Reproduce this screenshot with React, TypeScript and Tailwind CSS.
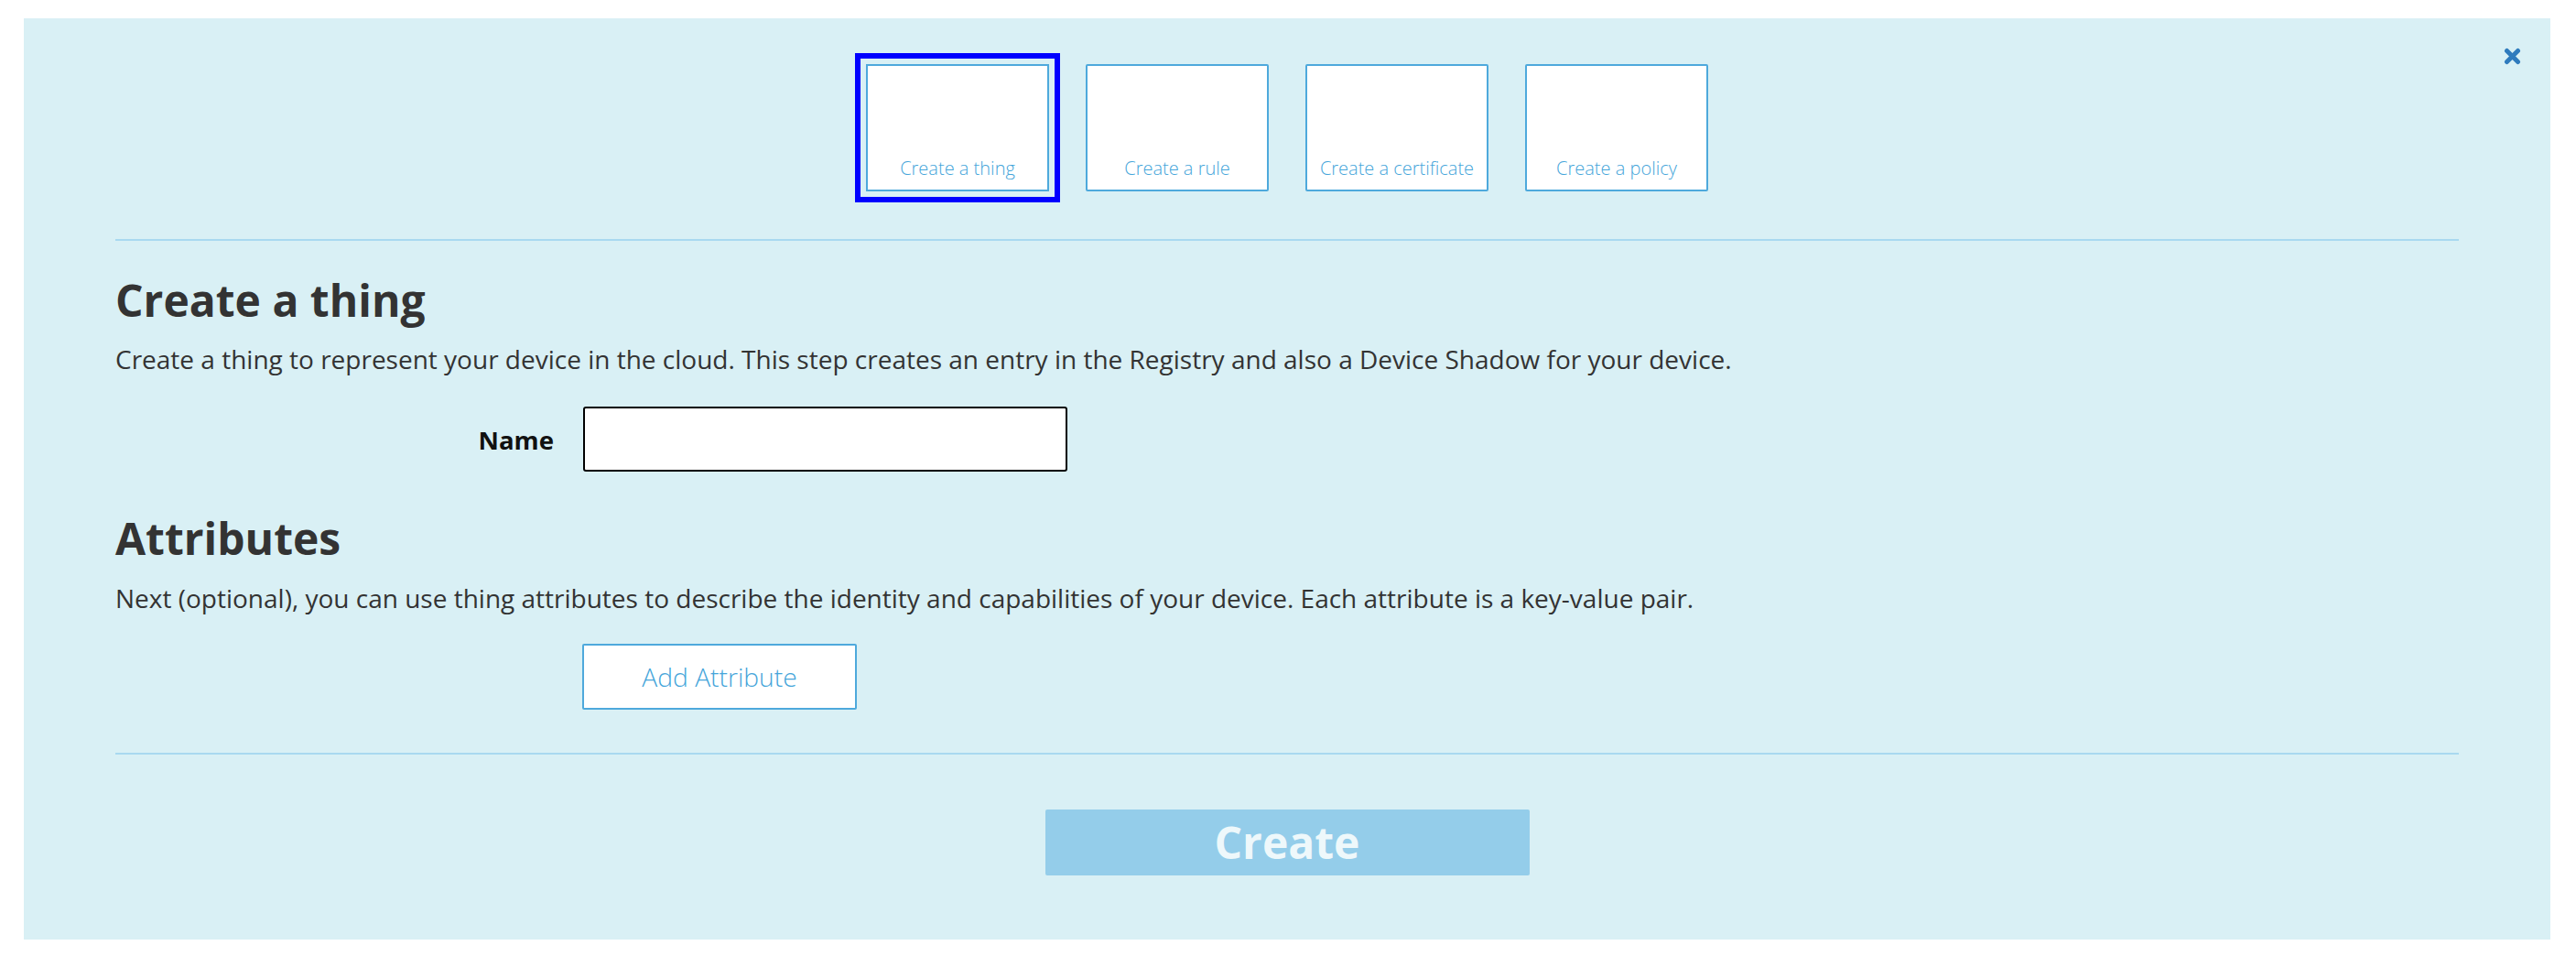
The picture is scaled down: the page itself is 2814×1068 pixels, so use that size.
import React from "react";

const cards = ["Create a thing", "Create a rule", "Create a certificate", "Create a policy"];

export default function App() {
  return (
    <div
      className="w-[2814px] h-[1068px] bg-white pt-[20px] pl-[26px]"
      style={{ fontFamily: '"Open Sans", "Noto Sans", sans-serif' }}
    >
      <div className="relative w-[2760px] h-[1006px] bg-[#d9f0f5] px-[100px] pt-[50px]">
        <button className="absolute top-[32px] right-[32px] w-[19px] h-[19px]" aria-label="Close">
          <svg viewBox="0 0 19 19" width="19" height="19">
            <path d="M3.5 3.5 L15.5 15.5 M15.5 3.5 L3.5 15.5" stroke="#2f7bbd" strokeWidth="5" strokeLinecap="round" fill="none" />
          </svg>
        </button>

        <div className="flex justify-center gap-[40px]">
          {cards.map((c, i) => (
            <div
              key={c}
              className={
                "w-[200px] h-[139px] bg-white border-2 border-[#4ea9dc] flex flex-col justify-end items-center pb-[8px] " +
                (i === 0
                  ? "rounded-none outline-solid outline-[6px] outline-[#0000ff] outline-offset-[6px]"
                  : "rounded-[2px]")
              }
            >
              <span className="text-[20px] leading-[30px] font-light text-[#45a5da] whitespace-nowrap">{c}</span>
            </div>
          ))}
        </div>

        <div className="mt-[52px] h-[2px] bg-[#a9d9f0]" />

        <h2 className="mt-[37px] text-[48px] leading-[56px] font-bold text-[#333333]">Create a thing</h2>
        <p className="mt-[18px] text-[28px] leading-[36px] text-[#333333]">
          Create a thing to represent your device in the cloud. This step creates an entry in the Registry and also a Device Shadow for your device.
        </p>

        <div className="mt-[34px] flex items-center">
          <label className="w-[479px] text-right text-[27.6px] leading-[40px] font-bold text-[#111111]">Name</label>
          <input
            type="text"
            className="ml-[32px] w-[529px] h-[71px] bg-white border-2 border-black rounded-[3px] outline-none px-3 text-[25px]"
          />
        </div>

        <h2 className="mt-[45px] text-[48px] leading-[56px] font-bold text-[#333333]">Attributes</h2>
        <p className="mt-[19px] text-[28px] leading-[36px] text-[#333333]">
          Next (optional), you can use thing attributes to describe the identity and capabilities of your device. Each attribute is a key-value pair.
        </p>

        <div className="mt-[32px] pl-[510px]">
          <button className="w-[300px] h-[72px] bg-white border-2 border-[#4ea9dc] rounded-[2px] text-[28.2px] font-light text-[#45a5da]">
            Add Attribute
          </button>
        </div>

        <div className="mt-[47px] h-[2px] bg-[#a9d9f0]" />

        <div className="mt-[60px] flex justify-center">
          <button className="w-[529px] h-[72px] bg-[#94cdea] rounded-[2px] text-[48px] leading-[72px] font-bold text-[#eef8fb]">
            Create
          </button>
        </div>
      </div>
    </div>
  );
}
